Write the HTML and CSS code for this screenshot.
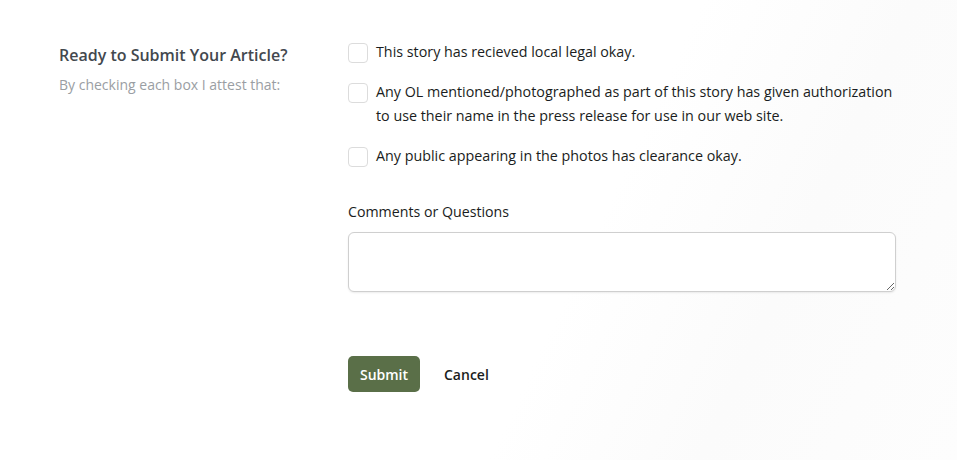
FILE: index.html
```html
<!DOCTYPE html>
<html>
<head>
<meta charset="utf-8">
<link rel="stylesheet" href="styles.css">
</head>
<body>
<div class="page">
  <div class="intro">
    <h2 class="title">Ready to Submit Your Article?</h2>
    <p class="subtitle">By checking each box I attest that:</p>
  </div>
  <div class="form">
    <div class="checks">
      <label class="check"><span class="box"></span><span class="text">This story has recieved local legal okay.</span></label>
      <label class="check"><span class="box"></span><span class="text">Any OL mentioned/photographed as part of this story has given authorization to use their name in the press release for use in our web site.</span></label>
      <label class="check"><span class="box"></span><span class="text">Any public appearing in the photos has clearance okay.</span></label>
    </div>
    <div class="field">
      <div class="label">Comments or Questions</div>
      <textarea class="comments"></textarea>
    </div>
    <div class="actions">
      <button class="submit">Submit</button>
      <button class="cancel">Cancel</button>
    </div>
  </div>
</div>
</body>
</html>
```
FILE: styles.css
```css
html, body {
  margin: 0;
  height: 100%;
}
body {
  font-family: "Open Sans", "Liberation Sans", sans-serif;
  background: linear-gradient(115deg, #ffffff 0%, #ffffff 60%, #fbfbfb 78%, #fdfdfd 100%);
  color: #1a1d21;
}
.page {
  display: grid;
  grid-template-columns: 289px 548px;
  padding: 40px 0 0 59px;
}
.intro {
  padding-top: 3px;
}
.title {
  margin: 0;
  font-size: 16px;
  font-weight: 600;
  line-height: 24px;
  color: #43484e;
}
.subtitle {
  margin: 8px 0 0;
  font-size: 14px;
  line-height: 20px;
  color: #9a9ea3;
}
.form {
  display: flex;
  flex-direction: column;
}
.checks {
  display: flex;
  flex-direction: column;
  gap: 16px;
}
.check {
  display: flex;
  gap: 8px;
  font-size: 14.3px;
  line-height: 24px;
}
.box {
  flex: none;
  width: 18px;
  height: 18px;
  margin-top: 3px;
  border: 1px solid #dcdcdc;
  border-radius: 4px;
  background: #fff;
}
.text {
  max-width: 530px;
}
.field {
  margin-top: 32px;
  display: flex;
  flex-direction: column;
  gap: 8px;
}
.label {
  font-size: 14.2px;
  line-height: 24px;
}
.comments {
  box-sizing: border-box;
  width: 548px;
  height: 60px;
  border: 1px solid #cfcfcf;
  border-radius: 6px;
  background: #fff;
  box-shadow: 0 1px 2px rgba(0,0,0,0.08);
  resize: vertical;
  font-family: inherit;
}
.actions {
  margin-top: 64px;
  display: flex;
  align-items: center;
  gap: 24px;
}
.submit {
  width: 72px;
  height: 36px;
  border: none;
  border-radius: 5px;
  background: #5a6f48;
  color: #fff;
  font-family: inherit;
  font-size: 14px;
  font-weight: 600;
}
.cancel {
  border: none;
  background: none;
  padding: 0;
  font-family: inherit;
  font-size: 14px;
  font-weight: 600;
  color: #1a1d21;
}
```
